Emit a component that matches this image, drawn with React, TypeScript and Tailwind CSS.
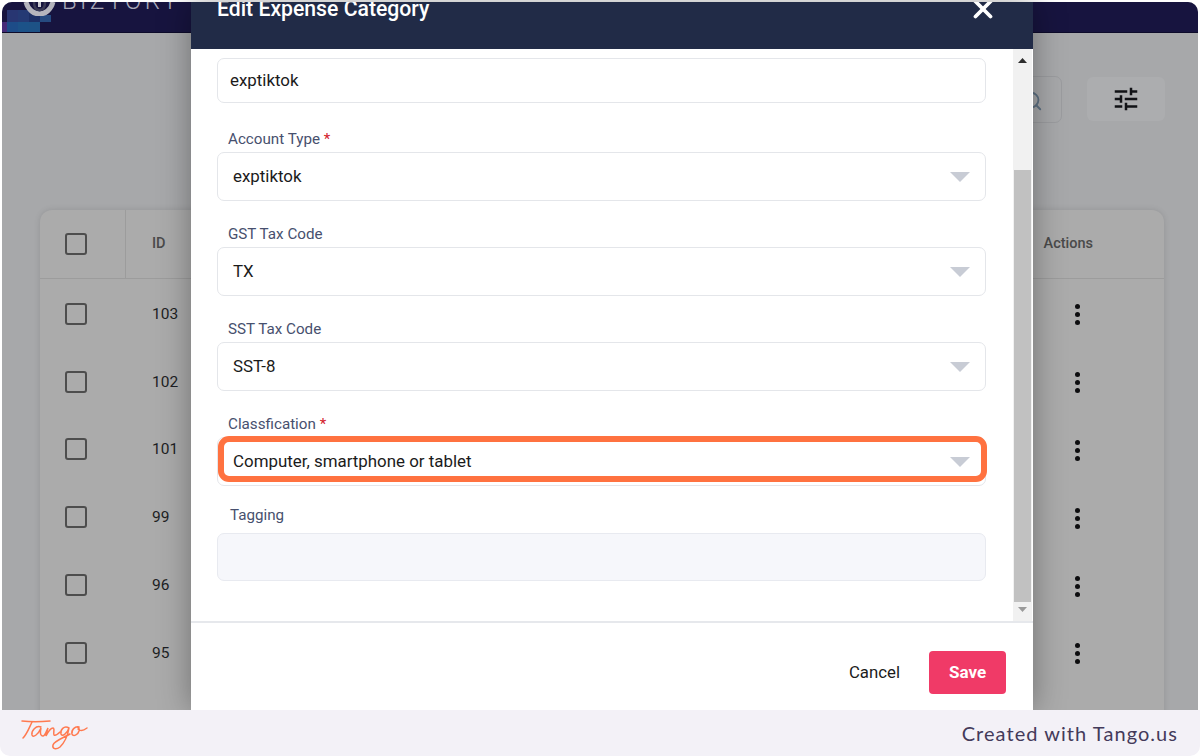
import { Search, X } from 'lucide-react';
import { MdTune } from 'react-icons/md';

const rows = ['103', '102', '101', '99', '96', '95'];

function Checkbox() {
  return <span className="block w-[22px] h-[22px] border-2 border-[#4d4d4d] rounded-[3px]" />;
}

function Field({ label, required, value, ring }: { label: string; required?: boolean; value: string; ring?: boolean }) {
  return (
    <div className="ml-[26px] mr-[47px]">
      <div className="pl-[11px] h-[24px] text-[15.200px] leading-[22px] text-[#47506e]">
        {label}
        {required && <span className="text-[#d3202a]"> *</span>}
      </div>
      <div className="relative h-[49px] border border-[#e4e6ea] rounded-[7px] flex items-center text-[16.900px] text-[#1b1b1b] pl-[15px]">
        {value}
        <svg className="absolute right-[15px] top-[19px]" width="20" height="10" viewBox="0 0 20 10">
          <path d="M0 0h20l-10 10z" fill="#c8ccd5" />
        </svg>
        {ring && <div className="absolute left-0 right-[-2px] top-[-2px] h-[46px] rounded-[11px] border-[6px] border-[#ff7240]" />}
      </div>
    </div>
  );
}

export default function App() {
  return (
    <div className="relative w-[1200px] h-[756px] bg-white overflow-hidden font-['Roboto',sans-serif]">
      {/* page behind the dialog */}
      <div className="absolute left-[2px] top-[2px] w-[1196px] h-[708px] rounded-t-[10px] overflow-hidden bg-[#a7a8aa]">
        <div className="h-[31px] bg-[#17143f] border-b border-[#0d0b2a] relative overflow-hidden">
          {/* mosaic behind the logo */}
          <div className="absolute left-0 top-[20px] w-[5px] h-[11px] bg-[#452a78]" />
          <div className="absolute left-[5px] top-[8px] w-[11px] h-[12px] bg-[#283672]" />
          <div className="absolute left-[16px] top-[8px] w-[11px] h-[12px] bg-[#253a74]" />
          <div className="absolute left-[27px] top-[8px] w-[11px] h-[12px] bg-[#1c2f66]" />
          <div className="absolute left-[38px] top-[13px] w-[11px] h-[7px] bg-[#264a80]" />
          <div className="absolute left-[5px] top-[20px] w-[11px] h-[11px] bg-[#1d4c88]" />
          <div className="absolute left-[16px] top-[20px] w-[11px] h-[11px] bg-[#1c5288]" />
          <div className="absolute left-[27px] top-[20px] w-[11px] h-[11px] bg-[#1d5286]" />
          <div className="relative flex items-end pl-[21px] h-[8px] text-[#a9a9b8]">
            <svg width="33" height="14" viewBox="0 0 33 14" fill="none" className="mb-[-6px]">
              <path d="M3 0C5 8 11 12 16.500 12C22 12 28 8 30 0" stroke="#b5b5bd" strokeWidth="5" />
              <path d="M11 0C11 5 13 8 16.500 8C20 8 22 5 22 0" stroke="#3a3a55" strokeWidth="2.500" />
              <path d="M16.500 0V5" stroke="#c9c9d0" strokeWidth="3" />
            </svg>
            <span className="ml-[6px] text-[24px] leading-[18px] tracking-[3.400px] font-light">BIZTORY</span>
          </div>
        </div>
        <div className="flex justify-end gap-[25px] pt-[43px] pr-[33px]">
          <div className="w-[140px] h-[47px] border border-[#9b9c9f] rounded-[7px] flex items-center justify-end pr-[18px]">
            <Search size={22} className="text-[#5e7183] mt-[2px]" />
          </div>
          <div className="w-[78px] h-[44px] mt-[1px] bg-[#acadaf] rounded-[6px] flex items-center justify-center">
            <MdTune size={30} className="text-[#111216]" />
          </div>
        </div>
        <div className="ml-[38px] mr-[34px] mt-[87px] rounded-t-[12px] bg-[#ababab] h-[520px] shadow-[0_0_6px_rgba(0,0,0,0.12)]">
          <div className="h-[69px] flex items-center border-b border-[#9c9c9c] text-[#4a4a4a] font-medium text-[14.500px]">
            <div className="w-[86px] h-full flex items-center pl-[25px] border-r border-[#9c9c9c]">
              <Checkbox />
            </div>
            <div className="pl-[26px]">ID</div>
            <div className="ml-auto mr-[71px]">Actions</div>
          </div>
          <div className="pt-[1px]">
            {rows.map((id) => (
              <div key={id} className="h-[67.800px] flex items-center text-[#1d1f24] text-[15.500px]">
                <div className="w-[86px] pl-[25px]">
                  <Checkbox />
                </div>
                <div className="pl-[26px] mt-[1px]">{id}</div>
                <div className="ml-auto mr-[84px] mt-[2px] flex flex-col gap-[3px]">
                  {[0, 1, 2].map((d) => (
                    <span key={d} className="w-[5px] h-[5px] rounded-full bg-[#0d0d0f]" />
                  ))}
                </div>
              </div>
            ))}
          </div>
        </div>
      </div>

      {/* dialog */}
      <div className="absolute left-[191px] top-[2px] w-[842px] h-[708px] bg-white overflow-hidden flex flex-col shadow-[0_0_30px_rgba(0,0,0,0.35)]">
        <div className="h-[47px] shrink-0 bg-[#212b47] relative pl-[26px] text-white font-medium text-[21.200px] leading-[14px]">
          Edit Expense Category
          <X size={30} strokeWidth={3} className="absolute right-[35px] top-[-8px] text-white" />
        </div>
        <div className="relative h-[574px] shrink-0 border-b-2 border-[#e6e8ec]">
          <div className="ml-[26px] mr-[47px] mt-[9px] h-[45px] border border-[#e4e6ea] rounded-[7px] flex items-center pl-[12px] text-[16.900px] text-[#1b1b1b]">
            exptiktok
          </div>
          <div className="h-[25px]" />
          <Field label="Account Type" required value="exptiktok" />
          <div className="h-[22px]" />
          <Field label="GST Tax Code" value="TX" />
          <div className="h-[22px]" />
          <Field label="SST Tax Code" value="SST-8" />
          <div className="h-[22px]" />
          <Field label="Classfication" required value="Computer, smartphone or tablet" ring />
          <div className="ml-[26px] mr-[47px] mt-[18px]">
            <div className="pl-[13px] h-[24px] text-[15.200px] leading-[22px] text-[#47506e]">Tagging</div>
            <div className="h-[48px] mt-[5px] border border-[#e8eaf0] rounded-[7px] bg-[#f6f7fb]" />
          </div>
          {/* scrollbar */}
          <div className="absolute right-[1px] top-0 bottom-0 w-[19px] bg-[#f1f1f1] flex flex-col">
            <div className="h-[121px] relative">
              <svg className="absolute left-[5px] top-[9px]" width="9" height="5" viewBox="0 0 9 5">
                <path d="M0 5h9L4.500 0z" fill="#2d2d2d" />
              </svg>
            </div>
            <div className="ml-[1px] w-[17px] h-[432px] bg-[#c1c1c1]" />
            <svg className="ml-[5px] mt-[5px]" width="9" height="5" viewBox="0 0 9 5">
              <path d="M0 0h9L4.500 5z" fill="#9a9a9a" />
            </svg>
          </div>
        </div>
        <div className="flex-1 flex items-start justify-end pt-[28px] pr-[27px]">
          <span className="text-[16.800px] text-[#1b1b1b] mr-[29px] leading-[42px]">Cancel</span>
          <div className="w-[77px] h-[43px] pt-[1px] rounded-[4px] bg-[#f03a67] text-white font-bold text-[17px] flex items-center justify-center">Save</div>
        </div>
      </div>

      {/* Tango footer */}
      <div className="absolute left-0 bottom-0 w-[1200px] h-[46px] bg-[#f3f1f7] rounded-b-[10px] flex items-center justify-between pl-[15px] pr-[22px]">
        <svg width="80" height="40" viewBox="0 0 80 40" fill="none" stroke="#ff7a50" strokeWidth="1.500" strokeLinecap="round" className="mt-[2px]">
          <path d="M7 7C15 8 25 8 35 7" />
          <path d="M17 8C14 14 12 20 8 24" />
          <path d="M26 13C21 11 16 17 17 21C18 24 23 21 26 14C25 18 25 22 28 22C30 22 31 18 33 14C32 17 31 20 31 22C33 18 36 14 38 14C40 14 38 20 39 21C41 22 43 20 45 18" />
          <path d="M54 14C49 11 45 16 46 20C47 23 52 20 54 14C53 20 50 28 45 33C41 36 37 35 38 31C39 27 48 24 55 20" />
          <path d="M64 13C60 12 56 16 57 20C58 23 63 21 64 17C65 14 63 13 62 13M63 15C65 17 68 17 72 14" />
        </svg>
        <span className="text-[20px] text-[#433a5a] tracking-[1.050px] font-['Lato',sans-serif]">Created with Tango.us</span>
      </div>
    </div>
  );
}
